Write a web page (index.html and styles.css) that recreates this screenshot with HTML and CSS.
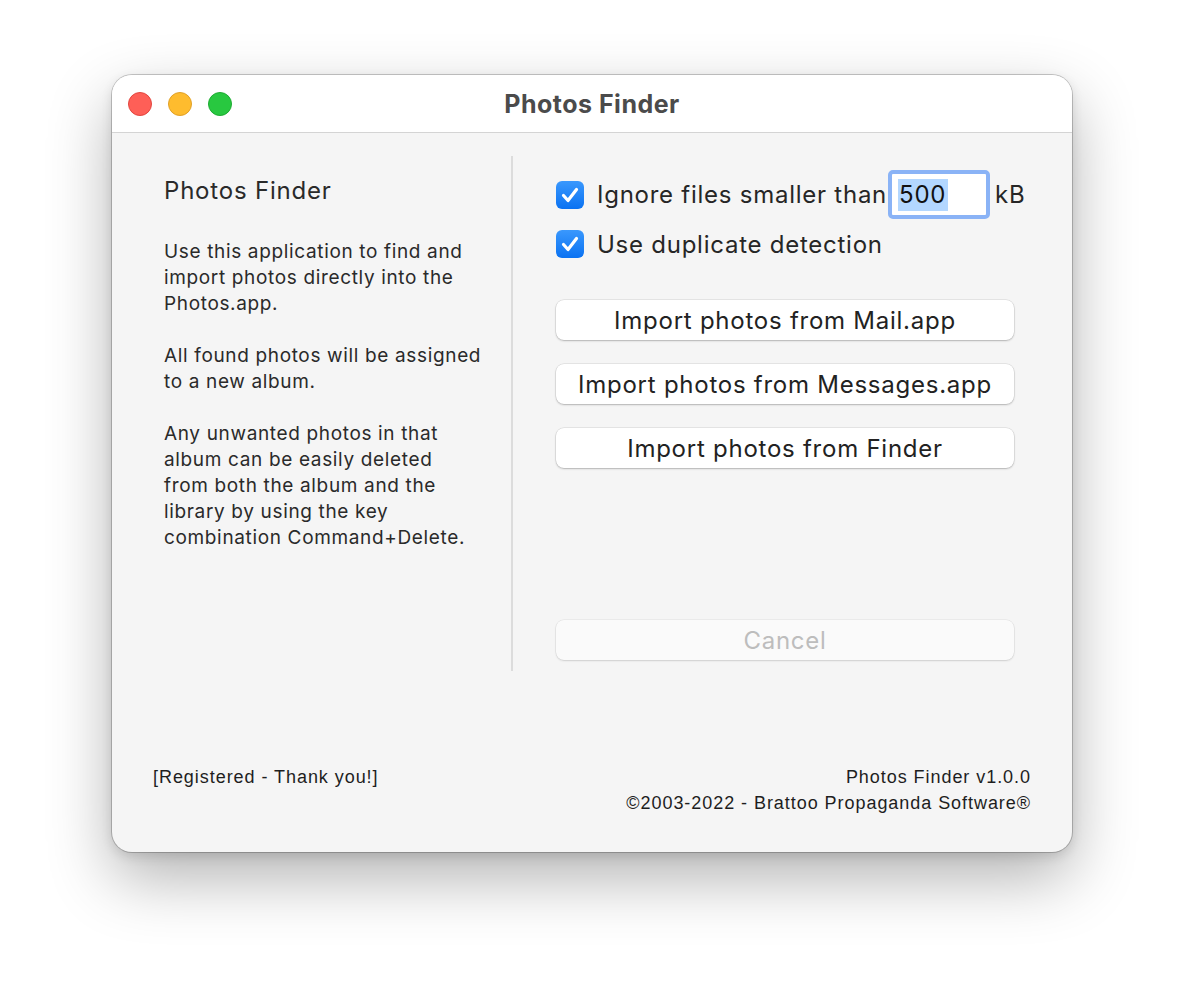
FILE: index.html
```html
<!DOCTYPE html>
<html lang="en">
<head>
  <meta charset="UTF-8" />
  <title>Photos Finder</title>
  <link rel="stylesheet" href="styles.css">
</head>
<body>
  <div class="window">
    <div class="titlebar">
      <div class="lights">
        <span class="light red"></span>
        <span class="light yellow"></span>
        <span class="light green"></span>
      </div>
      <div class="title">Photos Finder</div>
      <div></div>
    </div>

    <div class="main">
      <div class="info">
        <h2>Photos Finder</h2>
        <p>Use this application to find and<br>import photos directly into the<br>Photos.app.</p>
        <p>All found photos will be assigned<br>to a new album.</p>
        <p>Any unwanted photos in that<br>album can be easily deleted<br>from both the album and the<br>library by using the key<br>combination Command+Delete.</p>
      </div>
      <div class="divider"></div>
      <div class="actions">
        <div class="option first">
          <span class="check">
            <svg viewBox="0 0 28 28" width="28" height="28"><path d="M7.5 14.5 L12 19.5 L20.5 8.5" fill="none" stroke="#fff" stroke-width="3.2" stroke-linecap="round" stroke-linejoin="round"/></svg>
          </span>
          <span class="label">Ignore files smaller than</span>
          <span class="size-field"><span class="size-input"><span class="sel">500</span></span></span>
          <span class="label">kB</span>
        </div>
        <div class="option">
          <span class="check">
            <svg viewBox="0 0 28 28" width="28" height="28"><path d="M7.5 14.5 L12 19.5 L20.5 8.5" fill="none" stroke="#fff" stroke-width="3.2" stroke-linecap="round" stroke-linejoin="round"/></svg>
          </span>
          <span class="label">Use duplicate detection</span>
        </div>

        <div class="buttons">
          <button class="btn">Import photos from Mail.app</button>
          <button class="btn">Import photos from Messages.app</button>
          <button class="btn">Import photos from Finder</button>
        </div>

        <button class="btn cancel" disabled>Cancel</button>
      </div>
    </div>

    <div class="footer">
      <div>[Registered - Thank you!]</div>
      <div class="about">
        <div>Photos Finder v1.0.0</div>
        <div>©2003-2022 - Brattoo Propaganda Software®</div>
      </div>
    </div>
  </div>
</body>
</html>
```

FILE: styles.css
```css
html {
  background: #fff;
}
body {
  margin: 0;
  min-height: 1000px;
  box-sizing: border-box;
  padding: 75px 0 0 112px;
  font-family: Inter, "Noto Sans", sans-serif;
  color: #262626;
}
.window {
  width: 960px;
  height: 777px;
  border-radius: 20px;
  background: #f5f5f5;
  overflow: hidden;
  box-shadow: 0 0 0 1px rgba(0,0,0,0.2), 0 4px 12px rgba(0,0,0,0.12), 0 26px 64px rgba(0,0,0,0.3);
  display: flex;
  flex-direction: column;
}
.titlebar {
  height: 57px;
  background: #fff;
  border-bottom: 1px solid #d4d4d4;
  display: grid;
  grid-template-columns: 1fr auto 1fr;
  align-items: center;
}
.lights {
  display: flex;
  gap: 16px;
  padding-left: 16px;
}
.light {
  width: 24px;
  height: 24px;
  border-radius: 50%;
  box-sizing: border-box;
}
.red { background: #fe5f57; border: 1px solid #e2463f; }
.yellow { background: #febc2e; border: 1px solid #e0a028; }
.green { background: #28c840; border: 1px solid #1eab32; }
.title {
  font-size: 25px;
  font-weight: 700;
  letter-spacing: 0.5px;
  color: #4b4b4b;
}
.main {
  display: flex;
  padding-top: 23px;
  height: 515px;
}
.info {
  width: 347px;
  padding-left: 52px;
  color: #2a2a2a;
}
.info h2 {
  margin: 20px 0 33px;
  font-size: 24px;
  font-weight: 400;
  letter-spacing: 0.8px;
  line-height: 30px;
}
.info p {
  margin: 0 0 26px;
  font-size: 19px;
  letter-spacing: 0.65px;
  line-height: 26px;
}
.divider {
  width: 2px;
  background: #dcdcdc;
}
.actions {
  flex: 1;
  min-width: 0;
  padding: 14px 58px 0 43px;
  display: flex;
  flex-direction: column;
  letter-spacing: 0.75px;
}
.option {
  display: flex;
  align-items: center;
  height: 28px;
  margin-top: 11px;
  font-size: 24px;
  white-space: nowrap;
}
.option > * {
  flex-shrink: 0;
}
.option.first {
  height: 49px;
  margin-top: 0;
}
.check {
  width: 28px;
  height: 28px;
  border-radius: 6px;
  background: linear-gradient(#3a98fd, #0a72f2);
  margin-right: 13px;
  display: flex;
}
.size-field {
  margin-left: 1px;
  width: 102px;
  height: 49px;
  box-sizing: border-box;
  border: 4px solid #8ab3f6;
  border-radius: 5px;
  padding: 2px;
  background: #fff;
  margin-right: 5px;
}
.size-input {
  display: flex;
  align-items: center;
  height: 100%;
  padding-left: 4px;
}
.sel {
  background: #b3d7ff;
  color: #111;
  padding: 0 1px;
  line-height: 32px;
  width: 48px;
}
.buttons {
  display: flex;
  flex-direction: column;
  gap: 24px;
  margin-top: 42px;
}
.btn {
  height: 40px;
  width: 100%;
  border: none;
  border-radius: 8px;
  background: #fff;
  box-shadow: 0 0 0 0.5px rgba(0,0,0,0.12), 0 1px 2px rgba(0,0,0,0.22);
  font-family: Inter, "Noto Sans", sans-serif;
  font-size: 24px;
  letter-spacing: 0.75px;
  color: #222;
  padding: 0;
}
.cancel {
  margin-top: 152px;
  background: #fafafa;
  color: #bdbdbd;
  box-shadow: 0 0 0 0.5px rgba(0,0,0,0.08), 0 1px 2px rgba(0,0,0,0.12);
}
.footer {
  display: flex;
  justify-content: space-between;
  padding: 93px 41px 0;
  font-family: "Liberation Sans", Arial, sans-serif;
  font-size: 18px;
  letter-spacing: 0.95px;
  line-height: 26px;
  color: #1e1e1e;
}
.about {
  text-align: right;
}
```
